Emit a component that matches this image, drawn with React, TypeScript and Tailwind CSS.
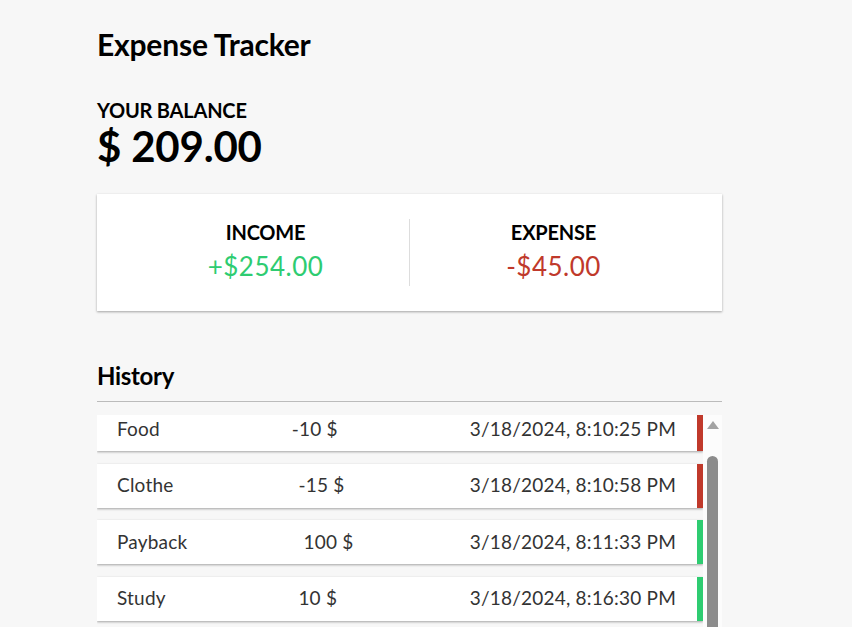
import React from "react";

const items = [
  { name: "Food", amount: "-10 $", date: "3/18/2024, 8:10:25 PM", neg: true },
  { name: "Clothe", amount: "-15 $", date: "3/18/2024, 8:10:58 PM", neg: true },
  { name: "Payback", amount: "100 $", date: "3/18/2024, 8:11:33 PM", neg: false },
  { name: "Study", amount: "10 $", date: "3/18/2024, 8:16:30 PM", neg: false },
];

export default function App() {
  return (
    <div
      className="h-[627px] w-full overflow-hidden bg-[#f7f7f7] text-black"
      style={{ fontFamily: "Lato, 'Open Sans', sans-serif" }}
    >
      <div className="ml-[97px] w-[625px] pt-[26px]">
        <h1 className="text-[30px] leading-[36px] font-bold tracking-[-0.2px]">Expense Tracker</h1>
        <h4 className="mt-[36px] text-[20px] leading-[24px] font-bold tracking-[-0.2px]">YOUR BALANCE</h4>
        <div className="text-[42px] leading-[48px] font-bold tracking-[-0.2px]">$ 209.00</div>

        <div className="mt-[24px] flex h-[117px] items-center bg-white px-[25px] shadow-[0_1px_3px_rgba(0,0,0,0.12),0_1px_2px_rgba(0,0,0,0.24)]">
          <div className="flex h-[67px] flex-1 flex-col items-center border-r border-[#dddddd]">
            <div className="text-[20px] leading-[26px] font-bold tracking-[-0.2px]">INCOME</div>
            <div className="mt-[6px] text-[26px] leading-[30px] tracking-[0.5px] text-[#2ecc71]">+$254.00</div>
          </div>
          <div className="flex h-[67px] flex-1 flex-col items-center">
            <div className="text-[20px] leading-[26px] font-bold tracking-[-0.2px]">EXPENSE</div>
            <div className="mt-[6px] text-[26px] leading-[30px] tracking-[0.5px] text-[#c0392b]">-$45.00</div>
          </div>
        </div>

        <h3 className="mt-[51px] text-[24px] leading-[28px] font-bold tracking-[-0.3px]">History</h3>
        <div className="mt-[11px] h-px bg-[#bbbbbb]" />

        <div className="mt-[13px] flex h-[212px] overflow-hidden">
          <div className="flex-1 overflow-hidden">
            <div className="-mt-[8px] flex flex-col gap-[12.5px]">
              {items.map((it) => (
                <div
                  key={it.name}
                  className={`flex h-[44px] shrink-0 items-center justify-between border-r-[6px] bg-white pl-[20px] pr-[21px] text-[19px] tracking-[0.2px] text-[#333333] shadow-[0_1px_3px_rgba(0,0,0,0.12),0_1px_2px_rgba(0,0,0,0.24)] ${
                    it.neg ? "border-[#c0392b]" : "border-[#2ecc71]"
                  }`}
                >
                  <span>{it.name}</span>
                  <span>{it.amount}</span>
                  <span>{it.date}</span>
                </div>
              ))}
            </div>
          </div>
          <div className="flex w-[19px] flex-col items-center bg-[#fcfcfc] pt-[6px]">
            <svg width="12" height="8" viewBox="0 0 12 8">
              <polygon points="6,0 12,8 0,8" fill="#a3a3a3" />
            </svg>
            <div className="mt-[27px] w-[11px] flex-1 rounded-t-[6px] bg-[#8c8c8c]" />
          </div>
        </div>
      </div>
    </div>
  );
}
